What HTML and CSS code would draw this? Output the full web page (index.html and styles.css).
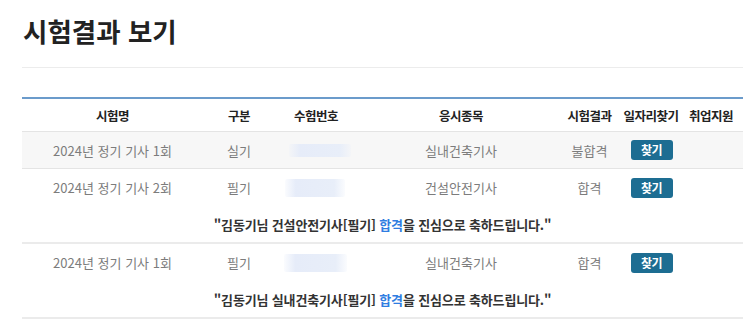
FILE: index.html
```html
<!DOCTYPE html>
<html lang="ko">
<head>
<meta charset="utf-8">
<link rel="stylesheet" href="styles.css">
</head>
<body>
<div class="page">
  <h1 class="title">시험결과 보기</h1>
  <div class="divider"></div>
  <div class="table">
    <div class="row head">
      <div class="c">시험명</div>
      <div class="c">구분</div>
      <div class="c">수험번호</div>
      <div class="c">응시종목</div>
      <div class="c">시험결과</div>
      <div class="c">일자리찾기</div>
      <div class="c">취업지원</div>
      <div class="c"></div>
    </div>
    <div class="row data shaded">
      <div class="c">2024년 정기 기사 1회</div>
      <div class="c">실기</div>
      <div class="c"><span class="blur b1"></span></div>
      <div class="c">실내건축기사</div>
      <div class="c">불합격</div>
      <div class="c"><button class="btn">찾기</button></div>
      <div class="c"></div>
      <div class="c"></div>
    </div>
    <div class="row data plain">
      <div class="c">2024년 정기 기사 2회</div>
      <div class="c">필기</div>
      <div class="c"><span class="blur b2"></span></div>
      <div class="c">건설안전기사</div>
      <div class="c">합격</div>
      <div class="c"><button class="btn">찾기</button></div>
      <div class="c"></div>
      <div class="c"></div>
    </div>
    <div class="msg">"김동기님 건설안전기사[필기]&nbsp;<span class="pass">합격</span>을 진심으로 축하드립니다."</div>
    <div class="row data plain">
      <div class="c">2024년 정기 기사 1회</div>
      <div class="c">필기</div>
      <div class="c"><span class="blur b3"></span></div>
      <div class="c">실내건축기사</div>
      <div class="c">합격</div>
      <div class="c"><button class="btn">찾기</button></div>
      <div class="c"></div>
      <div class="c"></div>
    </div>
    <div class="msg">"김동기님 실내건축기사[필기]&nbsp;<span class="pass">합격</span>을 진심으로 축하드립니다."</div>
  </div>
</div>
</body>
</html>
```

FILE: styles.css
```css
* { box-sizing: border-box; }
html, body { margin: 0; padding: 0; background: #fff; }
body {
  font-family: "Noto Sans CJK KR", "Noto Sans", sans-serif;
  color: #333;
  overflow: hidden;
}
.page {
  padding: 14px 0 0 22px;
}
.title {
  margin: 0;
  font-size: 26.5px;
  line-height: 34px;
  font-weight: 700;
  color: #222;
  letter-spacing: 0;
  padding-left: 1px;
}
.divider {
  margin-top: 19px;
  height: 1px;
  background: #ececec;
}
.table {
  margin-top: 29px;
  width: 721px;
  border-top: 2px solid #6b9bcb;
}
.row {
  display: grid;
  grid-template-columns: 181px 72px 82px 208px 49px 74px 46px 1fr;
  align-items: center;
}
.c {
  text-align: center;
  white-space: nowrap;
  display: flex;
  justify-content: center;
  align-items: center;
}
.head {
  height: 33px;
  border-bottom: 1px solid #e4e4e4;
  font-size: 12.5px;
  font-weight: 700;
  color: #222;
  letter-spacing: -0.5px;
}
.data {
  height: 37px;
  font-size: 13px;
  color: #7c7c7c;
  letter-spacing: 0;
}
.shaded {
  background: #f7f7f7;
  border-bottom: 1px solid #e4e4e4;
}
.blur {
  display: block;
  border-radius: 2px;
  background: linear-gradient(90deg, rgba(232,238,250,0.2), #e6ecf9 18%, #e8eef9 82%, rgba(232,238,250,0.2));
}
.b1 { width: 62px; height: 13px; margin-left: 8px; }
.b2 { width: 60px; height: 18px; margin-left: -3px; }
.b3 { width: 63px; height: 18px; margin-left: -2px; }
.btn {
  width: 42px;
  height: 20px;
  padding: 0;
  border: 0;
  border-radius: 3px;
  background: #1d6d92;
  color: #fff;
  font-family: "Noto Sans CJK KR", sans-serif;
  font-size: 12px;
  font-weight: 700;
  line-height: 20px;
  letter-spacing: -0.5px;
  margin-left: 1px;
}
.msg {
  height: 38px;
  display: flex;
  align-items: center;
  justify-content: center;
  font-size: 13px;
  font-weight: 700;
  color: #333;
  letter-spacing: -0.15px;
  border-bottom: 2px solid #ebebeb;
}
.pass { color: #2f7de1; }
```
